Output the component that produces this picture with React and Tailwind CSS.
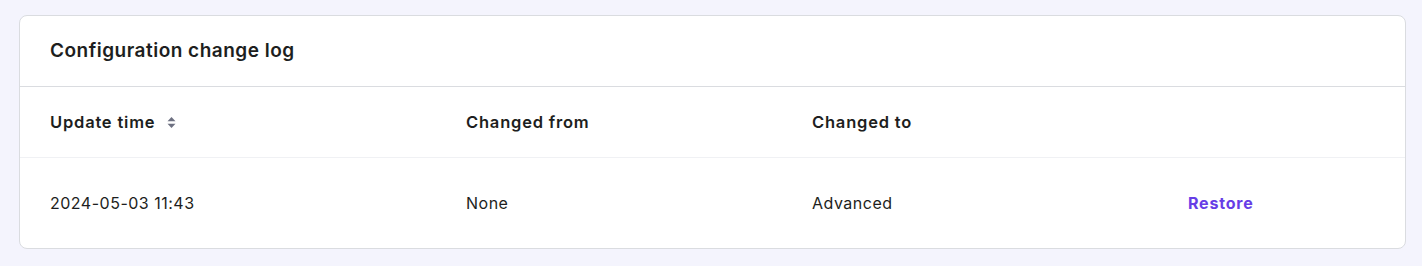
import React from 'react';

const rows = [
  { time: '2024-05-03 11:43', from: 'None', to: 'Advanced' },
];

function SortIcon() {
  return (
    <svg width="9" height="13" viewBox="0 0 9 13" className="ml-[12px] text-[#6d7081]">
      <path d="M4.5 1 L8.5 5.3 H0.5 Z" fill="currentColor" />
      <path d="M4.5 12 L8.5 7.7 H0.5 Z" fill="currentColor" />
    </svg>
  );
}

export default function App() {
  return (
    <div
      className="min-h-[266px] bg-[#f4f4fd] pt-[15px] pb-[17px] pl-[19px] pr-[16px]"
      style={{ fontFamily: 'Inter, "Noto Sans", sans-serif' }}
    >
      <div className="bg-white border border-[#dadce0] rounded-[8px] overflow-hidden text-[#1d1e20]">
        {/* Card header */}
        <div className="h-[71px] flex items-center px-[30px] border-b border-[#dadce0]">
          <h2 className="text-[19px] font-semibold tracking-[0.5px]">Configuration change log</h2>
        </div>

        {/* Table head */}
        <div className="h-[71px] flex items-center px-[30px] border-b border-[#f0f1f4] text-[16.5px] font-semibold tracking-[0.8px]">
          <div className="w-[416px] flex items-center">
            Update time
            <SortIcon />
          </div>
          <div className="w-[346px]">Changed from</div>
          <div className="w-[376px]">Changed to</div>
          <div className="flex-1" />
        </div>

        {/* Table body */}
        {rows.map((r) => (
          <div key={r.time} className="h-[90px] flex items-center px-[30px] text-[16px] tracking-[0.5px]">
            <div className="w-[416px]">{r.time}</div>
            <div className="w-[346px]">{r.from}</div>
            <div className="w-[376px]">{r.to}</div>
            <div className="flex-1">
              <button className="text-[#673de6] font-bold tracking-[0.8px]">Restore</button>
            </div>
          </div>
        ))}
      </div>
    </div>
  );
}
